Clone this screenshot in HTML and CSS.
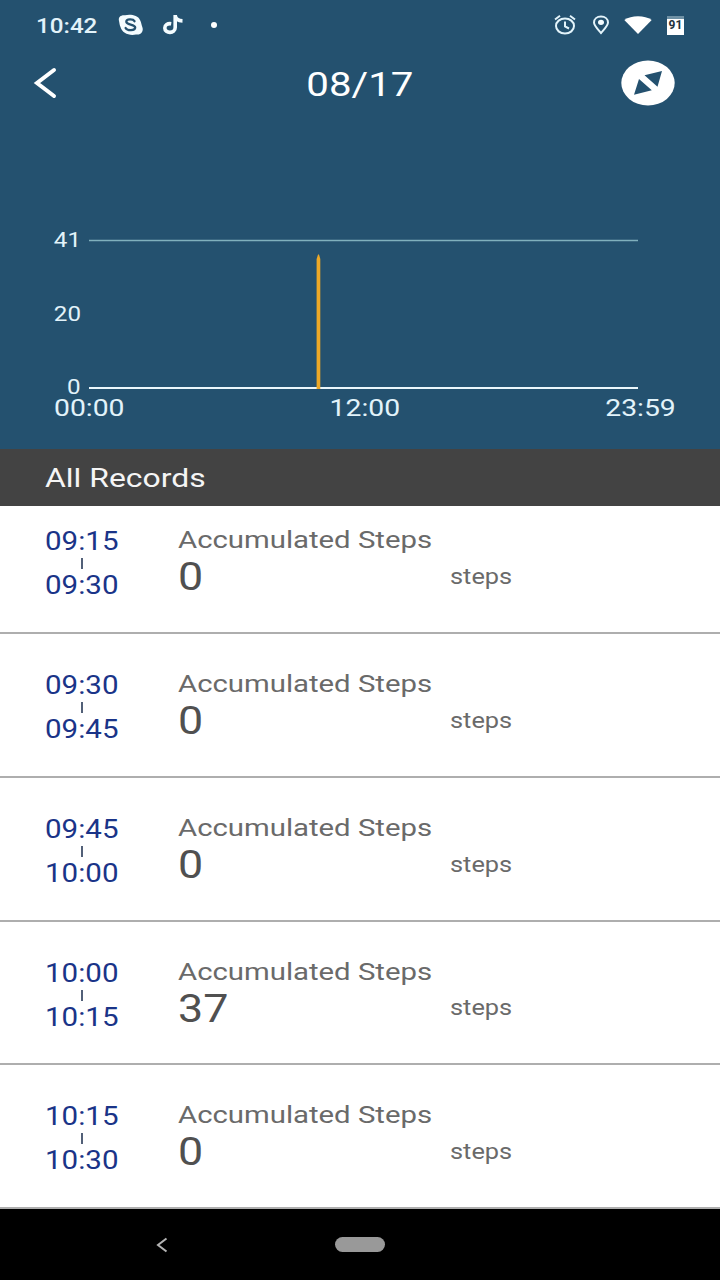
FILE: index.html
```html
<!DOCTYPE html>
<html lang="en">
<head>
<meta charset="utf-8">
<title>Steps 08/17</title>
<link rel="stylesheet" href="styles.css">
</head>
<body>
<div class="screen">
  <header class="hero">
    <div class="status">
      <span class="wide clock">10:42</span>
      <svg class="skype" width="26" height="22" viewBox="0 0 26 22"><path fill="#f4fcff" d="M1 7C0 3 3 .8 7 1.300C12 0 20 1 22 6C23.500 9 23.500 11 24.300 13C26 17 23 21.300 18 20.500C11 22 4 19 2.500 13C1.500 11 1.500 9 1 7Z"/><path fill="none" stroke="#24516f" stroke-width="2.300" stroke-linecap="round" d="M16.500 7.200C15 4.700 8.300 4.800 8.300 7.800C8.300 11.300 17.200 9.900 17.200 13.600C17.200 17 9.200 17 7.600 14"/></svg>
      <svg class="note" width="22" height="22" viewBox="0 0 22 22"><path fill="none" stroke="#f4fcff" stroke-width="3.600" d="M13.200 1V13.500C13.200 20 2.800 19.800 2.800 14C2.800 10.800 5.600 9.200 9.200 9.700M13.200 1.500C13.800 5 16.500 6.800 20.500 6.900"/></svg>
      <span class="dot"></span>
      <svg class="alarm" width="22" height="22" viewBox="0 0 22 22"><g fill="none" stroke="#e3f4fb" stroke-width="2"><ellipse cx="11" cy="12" rx="9" ry="7.600"/><path d="M1 5.500L6 1.800M21 5.500L16 1.800M11 7.500V12.500L15 14.500"/></g></svg>
      <svg class="pin" width="18" height="20" viewBox="0 0 18 20"><path fill="none" stroke="#e3f4fb" stroke-width="2" d="M9 18C5 13.500 2 10.500 2 7.500C2 4 5 1.500 9 1.500S16 4 16 7.500C16 10.500 13 13.500 9 18Z"/><ellipse cx="9" cy="7.300" rx="3" ry="2.600" fill="#f4fcff"/></svg>
      <svg class="wifi" width="28" height="18" viewBox="0 0 28 18"><path fill="#fff" d="M.3 4Q6 .3 14 .3T27.700 4L14 18Z"/></svg>
      <span class="battery"><span class="level">91</span></span>
    </div>
    <div class="bar">
      <svg class="back" width="26" height="34" viewBox="0 0 26 34"><path fill="none" stroke="#fff" stroke-width="4" stroke-linecap="round" stroke-linejoin="miter" d="M22 4L5 17L22 30"/></svg>
      <h1 class="wide title">08/17</h1>
      <svg class="rotate" width="54" height="46" viewBox="0 0 54 46"><ellipse cx="27" cy="23" rx="26.700" ry="22.500" fill="#fff"/><path fill="#24516f" d="M41 11L23.500 15.300L36.500 26.700ZM13 34.700L30.800 30.200L18 19Z"/></svg>
    </div>
    <div class="chart">
      <div class="y-axis"><span class="wide">41</span><span class="wide">20</span><span class="wide">0</span></div>
      <svg class="plot" width="549" height="151" viewBox="0 0 549 151"><path stroke="#80b0bd" stroke-width="1.500" d="M0 2.600H549"/><path stroke="#eaf6fb" stroke-width="2" d="M0 150H549"/><path fill="#eca827" d="M227.600 151V21L229 16.500H230L231.300 21V151Z"/></svg>
      <div class="x-axis"><span class="wide">00:00</span><span class="wide">12:00</span><span class="wide">23:59</span></div>
    </div>
  </header>
  <h2 class="section"><span class="wide">All Records</span></h2>
  <main class="list">
    <article class="row"><div class="range"><span class="wide">09:15</span><i class="tick"></i><span class="wide">09:30</span></div><div class="total"><span class="wide label">Accumulated Steps</span><span class="wide count">0</span></div><span class="wide unit">steps</span></article>
    <article class="row"><div class="range"><span class="wide">09:30</span><i class="tick"></i><span class="wide">09:45</span></div><div class="total"><span class="wide label">Accumulated Steps</span><span class="wide count">0</span></div><span class="wide unit">steps</span></article>
    <article class="row"><div class="range"><span class="wide">09:45</span><i class="tick"></i><span class="wide">10:00</span></div><div class="total"><span class="wide label">Accumulated Steps</span><span class="wide count">0</span></div><span class="wide unit">steps</span></article>
    <article class="row"><div class="range"><span class="wide">10:00</span><i class="tick"></i><span class="wide">10:15</span></div><div class="total"><span class="wide label">Accumulated Steps</span><span class="wide count">37</span></div><span class="wide unit">steps</span></article>
    <article class="row"><div class="range"><span class="wide">10:15</span><i class="tick"></i><span class="wide">10:30</span></div><div class="total"><span class="wide label">Accumulated Steps</span><span class="wide count">0</span></div><span class="wide unit">steps</span></article>
  </main>
  <nav class="nav">
    <svg class="nav-back" width="12" height="16" viewBox="0 0 12 16"><path fill="none" stroke="#b4b4b4" stroke-width="2" d="M10.500 1.500L2 8L10.500 14.500"/></svg>
    <span class="home"></span>
  </nav>
</div>
</body>
</html>
```
FILE: styles.css
```css
* { box-sizing: border-box; }
body { margin: 0; font-family: Roboto, "Liberation Sans", sans-serif; }
h1, h2 { margin: 0; font-weight: 400; }
svg { display: block; flex: none; }

.screen {
  width: 720px;
  height: 1280px;
  overflow: hidden;
  display: flex;
  flex-direction: column;
  background: #fff;
}

/* Horizontally extended lettering */
.wide {
  display: block;
  width: max-content;
  white-space: nowrap;
  transform: scaleX(1.18);
  transform-origin: left center;
}

.hero { flex: none; height: 449px; background: #24516f; color: #e2f3fa; }

.status { height: 50px; display: flex; align-items: center; padding-left: 36px; }
.clock { width: 82px; font-size: 20.500px; font-weight: 500; line-height: 24px; margin-top: 1px; }
.note { margin-left: 18px; }
.dot { width: 6px; height: 6px; border-radius: 50%; background: #fff; margin-left: 27px; }
.alarm { margin-left: 337px; }
.pin { margin-left: 16px; }
.wifi { margin-left: 14px; }
.battery {
  width: 17px;
  height: 19px;
  margin-left: 15px;
  border-top: 3px solid #6f91a5;
  background: #fff;
  color: #24323c;
}
.level { display: block; font-size: 12px; font-weight: 700; line-height: 13px; text-align: center; }

.bar { height: 66px; display: flex; align-items: center; justify-content: space-between; padding: 0 45px 0 32px; }
.title {
  font-size: 33px;
  line-height: 40px;
  margin: 3px 0 0 41px;
  color: #fff;
  transform: scaleX(1.22);
  transform-origin: center;
}

.chart {
  margin-top: 112px;
  padding: 0 44px 0 53.500px;
  display: grid;
  grid-template-columns: 27.500px 549px;
  column-gap: 8px;
}
.y-axis {
  height: 167px;
  margin-top: 2px;
  display: flex;
  flex-direction: column;
  justify-content: space-between;
  align-items: flex-end;
  font-size: 20.500px;
  line-height: 20px;
}
.y-axis .wide { transform-origin: right center; }
.plot { margin-top: 10px; }
.x-axis {
  grid-column: 1 / -1;
  width: 622px;
  height: 23px;
  display: flex;
  justify-content: space-between;
  font-size: 24px;
  line-height: 23px;
}
.x-axis .wide:nth-child(2) { transform-origin: center; }
.x-axis .wide:last-child { transform-origin: right center; }

.section {
  flex: none;
  height: 57px;
  padding-left: 45px;
  background: #434343;
  color: #f5f5f5;
  font-size: 26.700px;
  line-height: 58px;
}
.section .wide { transform: scaleX(1.195); }

.list {
  flex: none;
  height: 703px;
  overflow: hidden;
  display: flex;
  flex-direction: column;
  justify-content: flex-end;
}
.row {
  flex: none;
  height: 143.750px;
  padding-left: 45px;
  display: grid;
  grid-template-columns: 133px 272px auto;
  border-bottom: 2px solid #aeaeae;
}
.range { padding-top: 37px; color: #1a3488; font-size: 25px; line-height: 30px; }
.tick { display: block; width: 1.500px; height: 11px; margin: 1px 0 2px 36px; background: #526078; }
.total { padding-top: 35px; }
.label { font-size: 24.700px; line-height: 30px; color: #6a6a6a; transform: scaleX(1.188); }
.count { margin-top: 2px; font-size: 38px; line-height: 40px; color: #505050; }
.unit { padding-top: 73.800px; font-size: 21.500px; line-height: 26px; color: #6a6a6a; }

.nav { flex: 1; background: #000; display: flex; align-items: center; padding-left: 156px; }
.home { width: 50px; height: 15px; border-radius: 8px; background: #999; margin-left: 166.500px; }
```
